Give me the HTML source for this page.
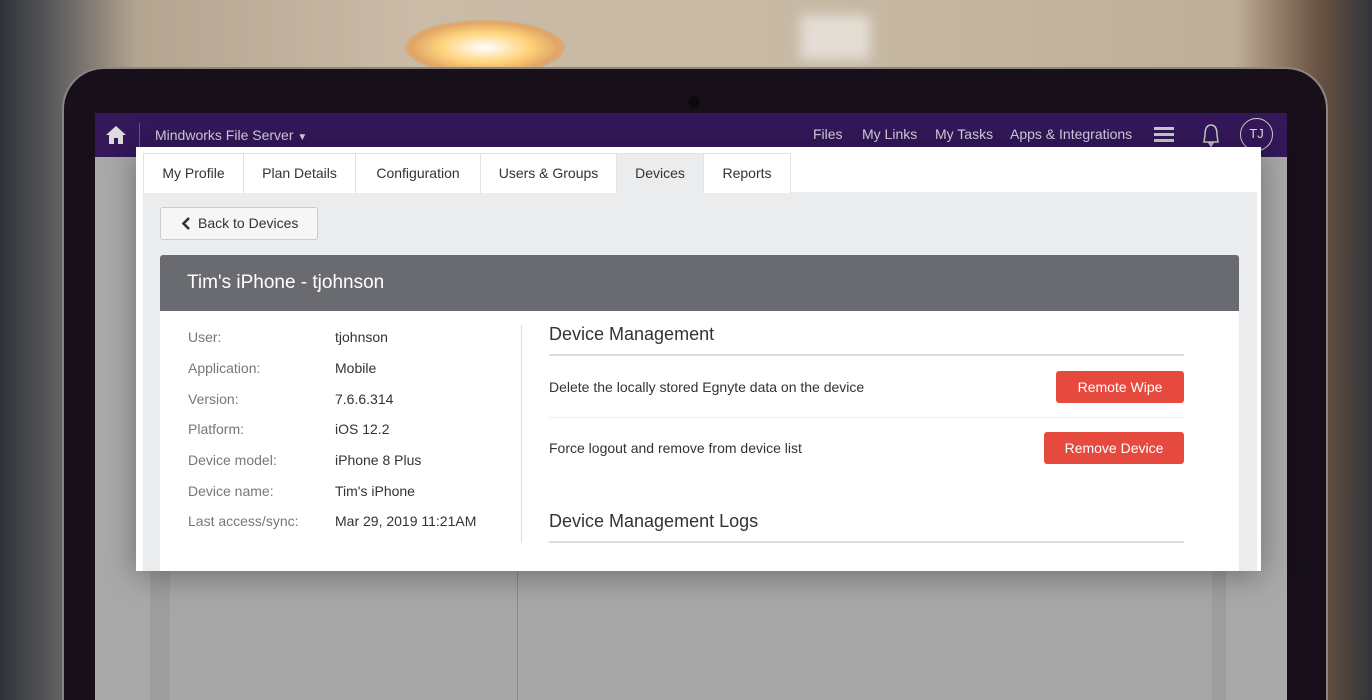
<!DOCTYPE html>
<html style="width:1372px;height:700px;overflow:hidden"><head><meta charset="utf-8"><style>
*{margin:0;padding:0;box-sizing:border-box}
body{width:1372px;height:700px;overflow:hidden;position:relative;font-family:"Liberation Sans",sans-serif;
background:linear-gradient(90deg,#2e3238 0%,#5d5c5e 4%,#b4a591 10%,#c9bba6 30%,#c7b9a4 60%,#bfae97 90%,#6a5443 96%,#34343a 100%);}
.a{position:absolute}
.glow{left:405px;top:20px;width:160px;height:55px;border-radius:50%;background:radial-gradient(ellipse at center,#fff 0%,#ffd27a 40%,rgba(240,150,60,0.6) 65%,rgba(200,150,100,0) 80%)}
.bezel{left:62px;top:67px;width:1266px;height:633px;background:#17101a;border-radius:42px 42px 0 0;border:2px solid #8a8580;border-bottom:none}
.screen{left:95px;top:113px;width:1192px;height:587px;background:#a9a9a9}
.nav{left:95px;top:113px;width:1192px;height:44px;background:#34185a}
.t{color:#d6d0e0;font-size:14px;top:126px}
.card{left:136px;top:147px;width:1125px;height:424px;background:#fff;box-shadow:0 4px 30px rgba(0,0,0,0.35)}
.tab{top:153px;height:40px;border:1px solid #e2e2e2;border-bottom:none;background:#fff;font-size:14px;color:#333;text-align:center;line-height:39px}
.cont{left:143px;top:192px;width:1114px;height:379px;background:#ebecee}
.lab{left:188px;font-size:14px;color:#777}
.val{left:335px;font-size:14px;color:#333}
.btn{background:#e64a3e;color:#fff;font-size:14px;text-align:center;border-radius:3px;height:32px;line-height:32px}
</style></head><body>
<div class="a glow"></div>
<div class="a" style="left:800px;top:15px;width:70px;height:45px;background:#e4ddd4;filter:blur(6px)"></div>
<div class="a bezel"></div>
<div class="a" style="left:688px;top:96px;width:12px;height:12px;border-radius:50%;background:#0a0a0c"></div>
<div class="a screen"></div>
<div class="a" style="left:150px;top:571px;width:1076px;height:129px;background:#a7a7a7;border-left:20px solid #9e9e9e;border-right:14px solid #9e9e9e"></div>
<div class="a" style="left:517px;top:571px;width:1px;height:129px;background:#8a8a8a"></div>
<div class="a nav"></div>
<svg class="a" style="left:105px;top:125px" width="22" height="20" viewBox="0 0 22 20"><path d="M11 1 L1 10 L4 10 L4 19 L9 19 L9 13 L13 13 L13 19 L18 19 L18 10 L21 10 Z" fill="#ddd"/></svg>
<div class="a" style="left:139px;top:123px;width:1px;height:26px;background:#6a5a80"></div>
<div class="a t" style="left:155px;top:127px">Mindworks File Server <span style="font-size:10px">▼</span></div>
<div class="a t" style="left:813px">Files</div>
<div class="a t" style="left:862px">My Links</div>
<div class="a t" style="left:935px">My Tasks</div>
<div class="a t" style="left:1010px">Apps &amp; Integrations</div>
<div class="a" style="left:1154px;top:127px;width:20px;height:3px;background:#ccc;box-shadow:0 6px 0 #ccc,0 12px 0 #ccc"></div>
<svg class="a" style="left:1199px;top:123px" width="24" height="26" viewBox="0 0 24 26"><path d="M12 2 C7 2 6 7 6 12 L5 19 L19 19 L18 12 C18 7 17 2 12 2 Z M10 20 L14 20 L12 23 Z" fill="none" stroke="#ccc" stroke-width="1.5"/></svg>
<div class="a" style="left:1240px;top:118px;width:33px;height:33px;border:1.5px solid #ccc;border-radius:50%;color:#ddd;font-size:13px;text-align:center;line-height:30px">TJ</div>
<div class="a card"></div>
<div class="a cont"></div>
<div class="a tab" style="left:143px;width:101px">My Profile</div>
<div class="a tab" style="left:243px;width:113px">Plan Details</div>
<div class="a tab" style="left:355px;width:126px">Configuration</div>
<div class="a tab" style="left:480px;width:137px">Users &amp; Groups</div>
<div class="a tab" style="left:616px;width:88px;background:#ebecee">Devices</div>
<div class="a tab" style="left:703px;width:88px">Reports</div>
<div class="a" style="left:160px;top:207px;width:158px;height:33px;border:1px solid #ccc;border-radius:3px;background:#f6f6f6;font-size:14px;color:#333;line-height:31px;padding-left:37px">Back to Devices</div>
<svg class="a" style="left:181px;top:217px" width="10" height="13" viewBox="0 0 10 13"><path d="M8 1 L2.5 6.5 L8 12" fill="none" stroke="#333" stroke-width="2.6"/></svg>
<div class="a" style="left:160px;top:255px;width:1079px;height:56px;background:#6a6b70;border-radius:3px 3px 0 0;color:#fff;font-size:19px;line-height:56px;padding-left:27px">Tim's iPhone - tjohnson</div>
<div class="a" style="left:160px;top:311px;width:1079px;height:260px;background:#fff"></div>
<div class="a lab" style="top:329px">User:</div><div class="a val" style="top:329px">tjohnson</div>
<div class="a lab" style="top:360px">Application:</div><div class="a val" style="top:360px">Mobile</div>
<div class="a lab" style="top:391px">Version:</div><div class="a val" style="top:391px">7.6.6.314</div>
<div class="a lab" style="top:421px">Platform:</div><div class="a val" style="top:421px">iOS 12.2</div>
<div class="a lab" style="top:452px">Device model:</div><div class="a val" style="top:452px">iPhone 8 Plus</div>
<div class="a lab" style="top:483px">Device name:</div><div class="a val" style="top:483px">Tim's iPhone</div>
<div class="a lab" style="top:513px">Last access/sync:</div><div class="a val" style="top:513px">Mar 29, 2019 11:21AM</div>
<div class="a" style="left:521px;top:325px;width:1px;height:218px;background:#ddd"></div>
<div class="a" style="left:549px;top:324px;font-size:18px;color:#333">Device Management</div>
<div class="a" style="left:549px;top:354px;width:635px;height:2px;background:#ddd"></div>
<div class="a" style="left:549px;top:379px;font-size:14px;color:#333">Delete the locally stored Egnyte data on the device</div>
<div class="a btn" style="left:1056px;top:371px;width:128px">Remote Wipe</div>
<div class="a" style="left:549px;top:417px;width:635px;height:1px;background:#eee"></div>
<div class="a" style="left:549px;top:440px;font-size:14px;color:#333">Force logout and remove from device list</div>
<div class="a btn" style="left:1044px;top:432px;width:140px">Remove Device</div>
<div class="a" style="left:549px;top:511px;font-size:18px;color:#333">Device Management Logs</div>
<div class="a" style="left:549px;top:541px;width:635px;height:2px;background:#ddd"></div>
</body></html>
